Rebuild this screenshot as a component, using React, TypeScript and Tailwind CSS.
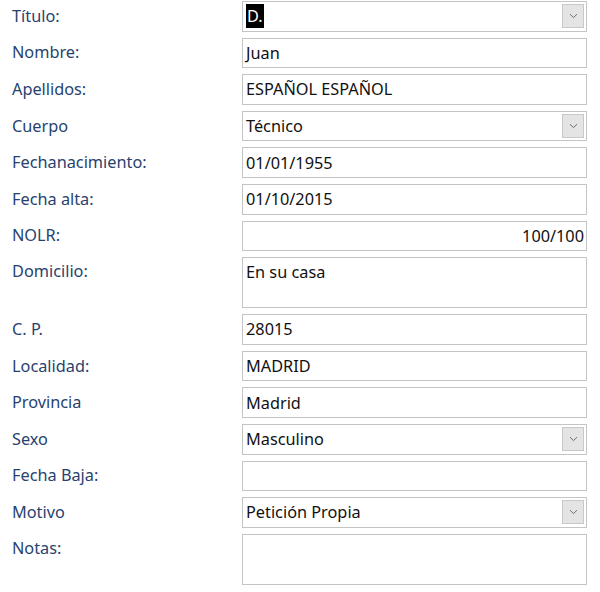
import React from 'react';

type Field = {
  label: string;
  value?: string;
  kind?: 'text' | 'select' | 'area';
  align?: 'left' | 'right';
  selected?: boolean;
};

const fields: Field[] = [
  { label: 'Título:', value: 'D.', kind: 'select', selected: true },
  { label: 'Nombre:', value: 'Juan' },
  { label: 'Apellidos:', value: 'ESPAÑOL ESPAÑOL' },
  { label: 'Cuerpo', value: 'Técnico', kind: 'select' },
  { label: 'Fechanacimiento:', value: '01/01/1955' },
  { label: 'Fecha alta:', value: '01/10/2015' },
  { label: 'NOLR:', value: '100/100', align: 'right' },
  { label: 'Domicilio:', value: 'En su casa', kind: 'area' },
  { label: 'C. P.', value: '28015' },
  { label: 'Localidad:', value: 'MADRID' },
  { label: 'Provincia', value: 'Madrid' },
  { label: 'Sexo', value: 'Masculino', kind: 'select' },
  { label: 'Fecha Baja:', value: '' },
  { label: 'Motivo', value: 'Petición Propia', kind: 'select' },
  { label: 'Notas:', value: '', kind: 'area' },
];

function Chevron() {
  return (
    <svg width="9" height="6" viewBox="0 0 9 6" fill="none">
      <path d="M1 1.2L4.5 4.6L8 1.2" stroke="#6b6b6b" strokeWidth="1" />
    </svg>
  );
}

function Row({ f }: { f: Field }) {
  const area = f.kind === 'area';
  return (
    <>
      <div className={area ? 'flex items-start pt-[2px] leading-6' : 'flex items-center leading-6 pb-[1px]'}>
        <span className="text-[#27426e]">{f.label}</span>
      </div>
      <div
        className={
          'flex border border-[#c4c4c4] bg-white text-[#111] leading-6 pl-[3px] ' +
          (area ? 'h-[51px] items-start pt-[2px]' : 'h-[30.6px] items-center') +
          (f.align === 'right' ? ' justify-end pr-[2px]' : '')
        }
      >
        {f.selected ? (
          <span className="bg-black text-white px-[1px]">{f.value}</span>
        ) : (
          <span>{f.value}</span>
        )}
        {f.kind === 'select' && (
          <div className="ml-auto mr-[2px] flex h-[24px] w-[22px] items-center justify-center border border-[#c8c8c8] bg-[#e4e4e4]">
            <Chevron />
          </div>
        )}
      </div>
    </>
  );
}

export default function App() {
  return (
    <div
      className="h-[592px] w-[600px] bg-white pl-[12px] pt-[1px] text-[16.3px]"
      style={{ fontFamily: '"Noto Sans", "Open Sans", sans-serif' }}
    >
      <div className="grid grid-cols-[230px_345px] gap-y-[6px]">
        {fields.map((f) => (
          <Row key={f.label} f={f} />
        ))}
      </div>
    </div>
  );
}
